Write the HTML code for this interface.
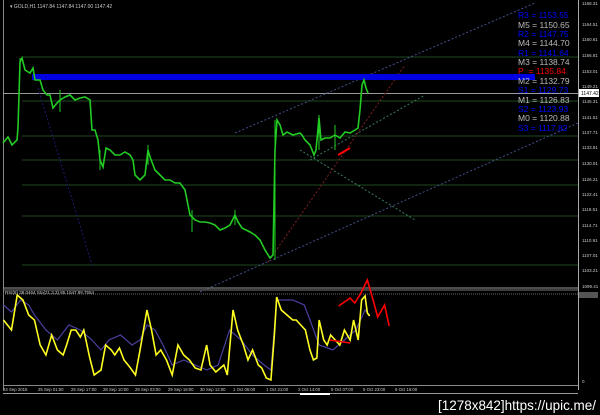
<!DOCTYPE html><html><head><meta charset="utf-8"><style>html,body{margin:0;padding:0;background:#000;width:600px;height:415px;overflow:hidden}svg{display:block}text{font-family:"Liberation Sans",sans-serif}</style></head><body>
<svg width="600" height="415" viewBox="0 0 600 415">
<rect width="600" height="415" fill="#000"/>
<line x1="3.5" y1="0" x2="3.5" y2="390" stroke="#888" stroke-width="1"/>
<line x1="578.5" y1="0" x2="578.5" y2="390" stroke="#aaa" stroke-width="1"/>
<g stroke="#1e4a1e" stroke-width="1">
<line x1="22" y1="57" x2="578" y2="57"/><line x1="22" y1="101" x2="578" y2="101"/><line x1="22" y1="136" x2="578" y2="136"/><line x1="22" y1="160" x2="578" y2="160"/><line x1="22" y1="185" x2="578" y2="185"/><line x1="22" y1="216" x2="578" y2="216"/><line x1="22" y1="265" x2="578" y2="265"/>
</g>
<line x1="3" y1="93.5" x2="578" y2="93.5" stroke="#999"/>
<g stroke-width="1" fill="none" stroke-dasharray="2,2">
<line x1="38" y1="88" x2="92" y2="265" stroke="#1a1a70"/>
<line x1="200" y1="292" x2="578" y2="123" stroke="#44508a"/>
<line x1="235" y1="133" x2="535" y2="3" stroke="#44508a"/>
<line x1="310" y1="160" x2="425" y2="95" stroke="#3a7a5a"/>
<line x1="300" y1="150" x2="415" y2="220" stroke="#3a7a5a"/>
<line x1="268" y1="262" x2="405" y2="65" stroke="#802020"/>
</g>
<rect x="32" y="74" width="503" height="6" fill="#0000e0"/>
<polyline fill="none" stroke="#22cc22" stroke-width="1.6" points="3,143 8,137 12,145 17,140 18,128 20,62 22,58 25,70 30,73 33,68 35,80 40,80 43,90 47,95 50,95 53,108 57,103 60,100 65,97 70,95 75,100 80,98 85,97 90,100 92,130 95,130 98,140 100,160 103,167 106,148 110,150 115,155 120,155 125,152 130,155 133,160 135,175 140,180 145,175 148,150 150,157 155,170 160,175 165,180 170,180 175,183 180,183 185,190 190,215 195,220 200,222 205,222 210,223 215,225 220,230 225,228 230,225 235,215 238,222 242,228 250,232 255,235 260,240 265,250 270,258 273,255 275,150 277,120 280,125 283,135 287,132 293,135 300,133 302,135 305,140 310,145 314,155 316,150 319,118 321,140 325,138 330,138 335,135 340,138 345,132 350,133 355,130 358,128 360,110 362,85 364,80 366,88 368,93"/>
<g stroke="#22cc22" stroke-width="1"><line x1="20" y1="58" x2="20" y2="72"/><line x1="60" y1="90" x2="60" y2="112"/><line x1="100" y1="150" x2="100" y2="170"/><line x1="148" y1="145" x2="148" y2="165"/><line x1="192" y1="210" x2="192" y2="232"/><line x1="235" y1="210" x2="235" y2="225"/><line x1="275" y1="120" x2="275" y2="260"/><line x1="319" y1="115" x2="319" y2="150"/><line x1="335" y1="125" x2="335" y2="150"/></g>
<line x1="338" y1="155" x2="350" y2="148" stroke="#f00" stroke-width="2"/>
<text x="10" y="8" font-size="5" fill="#ccc">▾ GOLD,H1  1147.84 1147.84 1147.00 1147.42</text>
<g font-size="8.5">
<text x="518" y="18" fill="#0000ff">R3 = 1153.55</text>
<text x="518" y="28" fill="#bbb">M5 = 1150.65</text>
<text x="518" y="37" fill="#0000ff">R2 = 1147.75</text>
<text x="518" y="46" fill="#bbb">M4 = 1144.70</text>
<text x="518" y="56" fill="#0000ff">R1 = 1141.64</text>
<text x="518" y="65" fill="#bbb">M3 = 1138.74</text>
<text x="518" y="74" fill="#ff0000">P&#160;&#160;= 1135.84</text>
<text x="518" y="84" fill="#bbb">M2 = 1132.79</text>
<text x="518" y="93" fill="#0000ff">S1 = 1129.73</text>
<text x="518" y="103" fill="#bbb">M1 = 1126.83</text>
<text x="518" y="112" fill="#0000ff">S2 = 1123.93</text>
<text x="518" y="121" fill="#bbb">M0 = 1120.88</text>
<text x="518" y="131" fill="#0000ff">S3 = 1117.82</text>
</g>
<g font-size="4.5" fill="#ccc">
<text x="582" y="5">1168.31</text><text x="582" y="26">1164.51</text><text x="582" y="41">1160.61</text><text x="582" y="57">1156.81</text><text x="582" y="73">1153.01</text><text x="582" y="88">1149.21</text><text x="582" y="103">1145.31</text><text x="582" y="119">1141.51</text><text x="582" y="134">1137.71</text><text x="582" y="149">1133.81</text><text x="582" y="165">1130.01</text><text x="582" y="181">1126.21</text><text x="582" y="196">1122.41</text><text x="582" y="211">1118.51</text><text x="582" y="227">1114.71</text><text x="582" y="242">1110.91</text><text x="582" y="257">1107.01</text><text x="582" y="272">1103.21</text><text x="582" y="288">1099.41</text>
</g>
<rect x="579" y="89" width="20" height="8" fill="#fff"/><text x="581" y="95" font-size="5" fill="#000">1147.42</text>
<line x1="3" y1="288" x2="578" y2="288" stroke="#999"/><line x1="3" y1="290" x2="578" y2="290" stroke="#777"/>
<line x1="3" y1="294" x2="578" y2="294" stroke="#666" stroke-dasharray="1,1"/>
<line x1="3" y1="385.5" x2="578" y2="385.5" stroke="#888"/>
<rect x="579" y="292" width="19" height="6" fill="#555"/>
<text x="5" y="294" font-size="4.5" fill="#ccc">RSI(8) 38.0464  Sto(21,3,3) 85.1047 89.7554</text>
<g transform="matrix(1.148,0,0,1,0,0)">
<polyline fill="none" stroke="#4a40a0" stroke-width="1.2" vector-effect="non-scaling-stroke" points="3,305 10,312 18,300 25,305 30,315 40,330 50,340 60,325 70,330 80,340 88,350 95,340 105,335 115,345 122,340 128,325 135,330 142,345 150,365 160,360 170,365 180,370 190,365 200,330 210,340 220,355 230,365 236,370 241,300 255,300 265,305 270,320 278,345 290,350 300,340 310,330 318,310 322,315"/>
<polyline fill="none" stroke="#ffff22" stroke-width="1.6" vector-effect="non-scaling-stroke" points="3,320 10,330 15,295 20,300 25,315 30,320 35,345 40,355 45,335 50,350 55,355 58,345 62,330 66,330 70,337 73,330 78,357 82,375 88,370 92,345 97,350 100,355 104,348 108,360 113,367 118,375 122,350 128,310 132,330 136,355 140,350 145,360 150,375 155,345 160,355 165,360 170,368 175,370 180,345 183,365 188,372 195,365 198,375 203,310 207,330 212,345 216,360 220,350 225,365 228,368 232,378 236,380 239,335 241,297 245,310 250,315 255,320 258,320 262,325 266,330 270,350 273,360 276,358 278,320 282,340 285,345 288,335 292,340 296,345 300,330 305,340 308,320 312,340 315,300 318,296 320,313 322,316"/>
<polyline fill="none" stroke="#ff0000" stroke-width="1.6" vector-effect="non-scaling-stroke" points="295,306 305,298 309,303 314,294 320,280 325,300 329,317 335,305 339,326"/>
<polyline fill="none" stroke="#ff0000" stroke-width="1.6" vector-effect="non-scaling-stroke" points="287,340 305,343"/>
</g>
<text x="582" y="383" font-size="4.5" fill="#ccc">0</text>
<g font-size="4.3" fill="#ccc"><text x="3" y="391">24 Sep 2015</text><text x="38" y="391">25 Sep 01:00</text><text x="71" y="391">25 Sep 17:00</text><text x="103" y="391">28 Sep 10:00</text><text x="135" y="391">29 Sep 03:00</text><text x="168" y="391">29 Sep 19:00</text><text x="200" y="391">30 Sep 12:00</text><text x="233" y="391">1 Oct 05:00</text><text x="266" y="391">1 Oct 21:00</text><text x="298" y="391">2 Oct 14:00</text><text x="331" y="391">5 Oct 07:00</text><text x="363" y="391">5 Oct 23:00</text><text x="395" y="391">6 Oct 16:00</text></g>
<line x1="3" y1="393.5" x2="578" y2="393.5" stroke="#999"/>
<rect x="300" y="393" width="30" height="2" fill="#fff"/>
<text x="438" y="410" font-size="14" fill="#fff" font-family="Liberation Mono,monospace" textLength="158" lengthAdjust="spacingAndGlyphs">[1278x842]https://upic.me/</text>
</svg></body></html>
